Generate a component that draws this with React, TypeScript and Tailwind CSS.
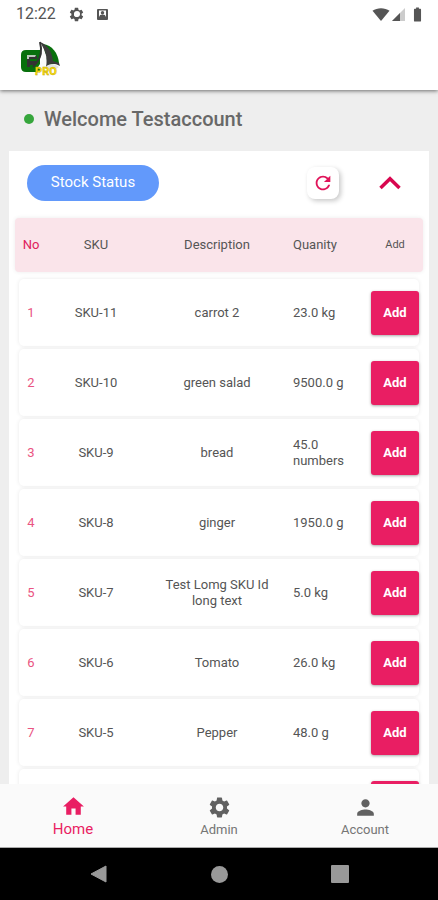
import React from "react";
import { MdBatteryFull, MdHome, MdPerson, MdRefresh, MdSettings } from "react-icons/md";

type StockItem = { no: number; sku: string; description: string; quantity: string };

const items: StockItem[] = [
  { no: 1, sku: "SKU-11", description: "carrot 2", quantity: "23.0 kg" },
  { no: 2, sku: "SKU-10", description: "green salad", quantity: "9500.0 g" },
  { no: 3, sku: "SKU-9", description: "bread", quantity: "45.0 numbers" },
  { no: 4, sku: "SKU-8", description: "ginger", quantity: "1950.0 g" },
  { no: 5, sku: "SKU-7", description: "Test Lomg SKU Id long text", quantity: "5.0 kg" },
  { no: 6, sku: "SKU-6", description: "Tomato", quantity: "26.0 kg" },
  { no: 7, sku: "SKU-5", description: "Pepper", quantity: "48.0 g" },
  { no: 8, sku: "", description: "", quantity: "" },
];

function StatusBar() {
  return (
    <div className="flex h-7 shrink-0 items-center justify-between pr-3 pl-4 text-[#555555]">
      <div className="flex items-center">
        <span className="w-[52px] text-base">12:22</span>
        <span className="relative flex">
          <MdSettings size={17} />
          <span className="absolute top-1/2 left-1/2 size-1.5 -translate-1/2 rounded-full bg-white" />
        </span>
        <svg width="11" height="11" viewBox="0 0 11 11" className="ml-3" aria-hidden="true">
          <rect width="11" height="11" rx="1" fill="#555555" />
          <rect x="2" y="1.5" width="7" height="6.5" fill="#ffffff" />
          <circle cx="5.5" cy="3.8" r="1.7" fill="#555555" />
          <path d="M2 8 Q2.5 5.6 5.5 5.6 Q8.5 5.6 9 8 Z" fill="#555555" />
        </svg>
      </div>
      <div className="flex items-center">
        <svg width="18" height="13" viewBox="0 0 18 13" aria-hidden="true">
          <path d="M0.5 2.8 C5 -0.6 13 -0.6 17.5 2.8 L9 13 Z" fill="#555555" />
        </svg>
        <svg width="13" height="13" viewBox="0 0 13 13" className="ml-0.5" aria-hidden="true">
          <path d="M0 13 L13 0 V13 Z" fill="#cccccc" />
          <path d="M0 13 L8 5 V13 Z" fill="#555555" />
        </svg>
        <MdBatteryFull size={17} className="ml-1" />
      </div>
    </div>
  );
}

function Logo() {
  return (
    <svg width="42" height="36" viewBox="0 0 42 36" role="img" aria-label="EZ Pro">
      <path d="M23 3 C32 4 38 12 39 22 L28 24 Z" fill="#08700c" />
      <path d="M6 9 H20 V31 H6 Q1 31 1 26 V14 Q1 9 6 9 Z" fill="#08700c" />
      <path d="M7 15 H17 V18 H10 V20 H16 V24 H10 V26 H7 Z" fill="#333333" />
      <path d="M7 14 H16 L15 16 H9 V18 H7 Z" fill="#b9c9b9" />
      <path d="M22 7 C24 15 22 21 18 26 L25 26 L27 15 Z" fill="#fafafa" />
      <path d="M20 1 C28 4 32 11 33 20 L39 22 L40 25 C34 22 30 22 26 26 C28 16 25 9 20 1 Z" fill="#3c3c3c" />
      <path d="M20 1 C22 9 22 15 17 21 L13 26" fill="none" stroke="#333333" strokeWidth="2" />
      <path d="M26 26 C30 22 35 23 39 26 L36 28 H26 Z" fill="#e4e4e4" />
      <text
        x="15"
        y="34"
        fontFamily="Roboto, sans-serif"
        fontSize="11"
        fontWeight="900"
        fill="#f7dc10"
        stroke="#b99a00"
        strokeWidth="0.3"
      >
        PRO
      </text>
    </svg>
  );
}

const rowGrid = "grid grid-cols-[24px_106fr_136fr_86fr_48px] items-center";

function StockTable() {
  return (
    <table className="block text-[13px] leading-4 text-[#555555]">
      <thead className="block px-1.5">
        <tr className={`${rowGrid} h-[54px] rounded-sm bg-[#fae4ea] px-1 shadow-[0_0_4px_rgba(0,0,0,0.08)]`}>
          <th className="text-center font-normal text-[#e0205c]">No</th>
          <th className="text-center font-normal">SKU</th>
          <th className="text-center font-normal">Description</th>
          <th className="pl-2 text-left font-normal">Quanity</th>
          <th className="text-center text-[11px] font-normal">Add</th>
        </tr>
      </thead>
      <tbody className="mt-[7px] flex flex-col gap-[3px] px-2.5">
        {items.map((item) => (
          <tr
            key={item.no}
            className={`${rowGrid} h-[67px] rounded-[5px] bg-white shadow-[0_0_4px_rgba(0,0,0,0.09)]`}
          >
            <td className="text-center text-[#ea5482]">{item.sku && item.no}</td>
            <td className="text-center">{item.sku}</td>
            <td className="px-3 text-center">{item.description}</td>
            <td className="pr-4 pl-2">{item.quantity}</td>
            <td>
              <button
                type="button"
                aria-label={`Add item ${item.no}`}
                className="block h-11 w-full rounded-[3px] bg-[#e91e63] text-[13px] font-bold text-white shadow-[0_1px_3px_rgba(0,0,0,0.35)]"
              >
                {item.sku && "Add"}
              </button>
            </td>
          </tr>
        ))}
      </tbody>
    </table>
  );
}

function BottomNav() {
  return (
    <nav className="grid h-16 shrink-0 grid-cols-3 border-b border-[#aaaaaa] bg-[#fafafa] text-[13px] leading-5 text-[#757575]">
      <a href="#home" className="flex flex-col items-center pt-2.5 text-[15px] text-[#e91e63]">
        <MdHome size={25} />
        Home
      </a>
      <a href="#admin" className="flex flex-col items-center pt-[11px]">
        <MdSettings size={25} className="text-[#616161]" />
        Admin
      </a>
      <a href="#account" className="flex flex-col items-center pt-[11px]">
        <MdPerson size={25} className="text-[#616161]" />
        Account
      </a>
    </nav>
  );
}

function SystemNav() {
  return (
    <div className="flex h-[52px] shrink-0 items-center justify-center gap-[103px] bg-black">
      <button type="button" aria-label="Back">
        <svg width="18" height="18" viewBox="0 0 18 18">
          <path d="M1 9 L16 1 V17 Z" fill="#999999" stroke="#999999" strokeLinejoin="round" />
        </svg>
      </button>
      <button type="button" aria-label="Home screen" className="size-[17px] rounded-full bg-[#999999]" />
      <button type="button" aria-label="Recent apps" className="size-[18px] rounded-[1px] bg-[#999999]" />
    </div>
  );
}

export default function App() {
  return (
    <div className="flex h-screen flex-col overflow-hidden bg-[#eeeeee] font-[Roboto,sans-serif]">
      <header className="z-10 shrink-0 bg-white shadow-[0_1px_4px_rgba(0,0,0,0.55)]">
        <StatusBar />
        <div className="flex h-[62px] items-center px-5">
          <Logo />
        </div>
      </header>
      <main className="min-h-0 flex-1 overflow-y-auto px-[9px] [scrollbar-width:none]">
        <div className="flex h-[61px] items-center gap-2.5 px-[15px] pb-1">
          <span className="size-2.5 rounded-full bg-[#36a63c]" />
          <h1 className="text-xl font-medium text-[#686868]">Welcome Testaccount</h1>
        </div>
        <section className="bg-white">
          <div className="flex h-[67px] items-center pr-7 pb-1 pl-[18px]">
            <button type="button" className="h-9 w-[132px] rounded-full bg-[#6299fb] text-[15px] text-white">
              Stock Status
            </button>
            <button
              type="button"
              aria-label="Refresh"
              className="ml-auto flex size-8 items-center justify-center rounded-lg bg-white text-[#e0145a] shadow-[2px_2px_5px_rgba(0,0,0,0.22)]"
            >
              <MdRefresh size={22} />
            </button>
            <button type="button" aria-label="Collapse" className="ml-10">
              <svg width="22" height="14" viewBox="0 0 22 14">
                <path d="M1.5 12 L11 2.8 L20.5 12" fill="none" stroke="#d8064f" strokeWidth="3.5" />
              </svg>
            </button>
          </div>
          <StockTable />
        </section>
      </main>
      <BottomNav />
      <SystemNav />
    </div>
  );
}
